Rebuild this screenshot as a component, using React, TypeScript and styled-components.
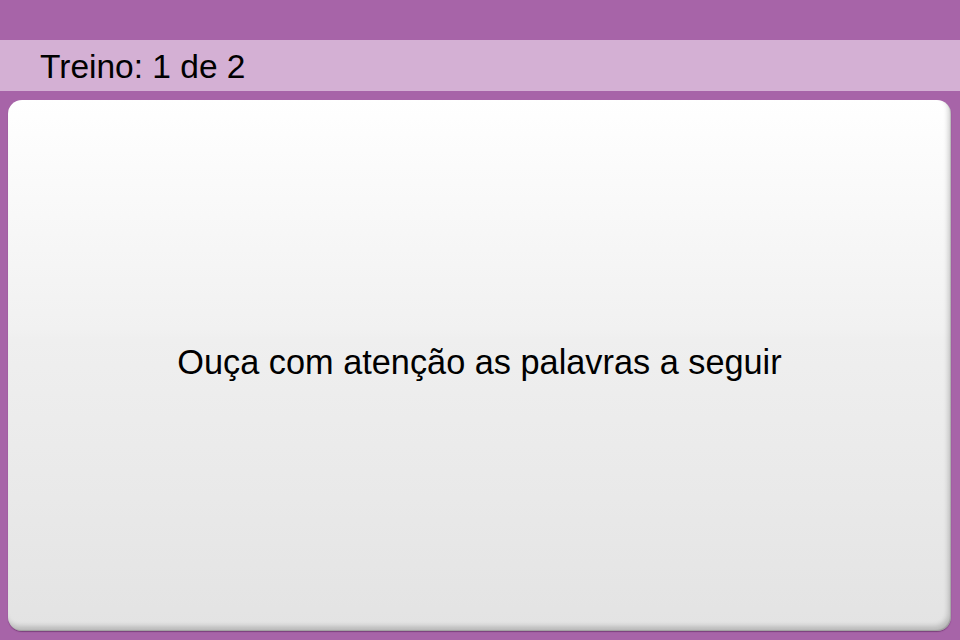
import styled, { createGlobalStyle } from "styled-components";

const GlobalStyle = createGlobalStyle`
    html, body {
        margin: 0;
        padding: 0;
        width: 960px;
        height: 640px;
        overflow: hidden;
        background: #A764A8;
        font-family: "Liberation Sans", Arial, sans-serif;
    }
`

const Screen = styled.div`
    width: 960px;
    height: 640px;
    display: flex;
    flex-direction: column;
    background: #A764A8;
`

const TopBar = styled.div`
    height: 40px;
    flex-shrink: 0;
`

const TitleBar = styled.div`
    height: 51px;
    flex-shrink: 0;
    background: #D4B0D4;
    display: flex;
    align-items: center;
    padding: 0 0 0 40px;
    h1 {
        margin: 0;
        font-weight: 400;
        font-size: 33.5px;
        color: #000;
        padding-top: 2px;
    }
`

const Body = styled.div`
    flex: 1;
    display: flex;
    padding: 9px 9px 9px 8px;
`

const Card = styled.div`
    flex: 1;
    border-radius: 14px;
    background: linear-gradient(
        to bottom,
        #ffffff 0%,
        #f7f7f7 25%,
        #f1f1f1 43%,
        #efefef 45%,
        #e9e9e9 75%,
        #e3e3e3 100%
    );
    box-shadow:
        inset -3px -5px 5px rgba(0, 0, 0, 0.18),
        inset -1px -1px 1px rgba(0, 0, 0, 0.15),
        0 1px 1px rgba(80, 30, 80, 0.5);
    display: flex;
    align-items: center;
    justify-content: center;
`

const Message = styled.p`
    margin: 0;
    padding-bottom: 6px;
    font-size: 34.3px;
    color: #000;
`

const App = () => {
    return (
        <Screen>
            <GlobalStyle />
            <TopBar />
            <TitleBar>
                <h1>Treino: 1 de 2</h1>
            </TitleBar>
            <Body>
                <Card>
                    <Message>Ouça com atenção as palavras a seguir</Message>
                </Card>
            </Body>
        </Screen>
    )
}

export default App;
